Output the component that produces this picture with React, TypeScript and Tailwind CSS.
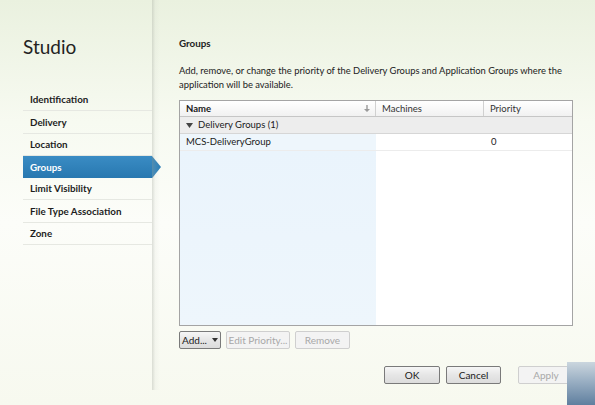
import React from "react";

const navItems = [
  "Identification",
  "Delivery",
  "Location",
  "Groups",
  "Limit Visibility",
  "File Type Association",
  "Zone",
];

function Btn({ children, disabled, w }: { children: React.ReactNode; disabled?: boolean; w: string }) {
  return (
    <div
      className={
        "h-[18px] flex items-center justify-center whitespace-nowrap rounded-[2px] border text-[10px] leading-none " +
        w +
        " " +
        (disabled
          ? "border-[#cfcfcf] bg-[#f3f3f3] text-[#a8a8a8]"
          : "border-[#7a7a7a] bg-[linear-gradient(180deg,#f6f6f6_0%,#e6e6e6_50%,#dcdcdc_100%)] text-[#1a1a1a]")
      }
    >
      {children}
    </div>
  );
}

export default function App() {
  return (
    <div
      className="relative w-[595px] h-[405px] overflow-hidden flex bg-[linear-gradient(180deg,#eaf1df_0%,#f7faf1_30%,#fcfdf9_55%,#f7f9ef_100%)] text-[#1a1a1a]"
      style={{ fontFamily: 'Lato, "Open Sans", sans-serif' }}
    >
      {/* left panel */}
      <div className="relative w-[152px] shrink-0 pt-[33px]">
        <div className="pl-[23px] text-[19px] leading-[28px] text-[#222]">Studio</div>
        <div className="mt-[28px] ml-[23px]">
          {navItems.map((n) => {
            const active = n === "Groups";
            return (
              <div
                key={n}
                className={
                  "relative h-[22.3px] flex items-center pl-[7px] text-[9.8px] font-bold " +
                  (active
                    ? "bg-[linear-gradient(180deg,#3a8cc4_0%,#2878b0_100%)] text-white"
                    : "border-b border-[#e6e8e2] text-[#1e1e1e]")
                }
              >
                {n}
                {active && (
                  <div className="absolute right-[-9px] top-0 h-full w-[9px] bg-[#2d7fb6] [clip-path:polygon(0_0,100%_50%,0_100%)]" />
                )}
              </div>
            );
          })}
        </div>
      </div>
      {/* shadow */}
      <div className="absolute left-[152px] top-[0px] h-[390px] w-[8px] bg-[linear-gradient(90deg,rgba(160,165,155,0.35)_0%,rgba(200,205,195,0.12)_40%,rgba(255,255,255,0)_100%)]" />

      {/* content */}
      <div className="relative flex-1 pl-[27px] pt-[35px] pr-[22px]">
        <div className="text-[9.8px] font-bold leading-[16px] text-[#222]">Groups</div>
        <div className="mt-[13px] text-[9.4px] leading-[13.5px] text-[#222]">
          Add, remove, or change the priority of the Delivery Groups and Application Groups where the application will be available.
        </div>
        {/* table */}
        <div className="mt-[9px] w-[394px] h-[226px] border border-[#a4a4a4] bg-white flex flex-col text-[9.5px]">
          <div className="flex h-[16px] border-b border-[#c6c6c6] bg-[linear-gradient(180deg,#ffffff_0%,#f1f1f1_100%)] leading-none">
            <div className="w-[196px] flex items-center justify-between pl-[6px] pr-[5px] border-r border-[#d0d0d0] font-bold">
              <span>Name</span>
              <svg width="6" height="7" viewBox="0 0 6 7">
                <path d="M2.3 0h1.4v4H6L3 7 0 4h2.3z" fill="#9a9a9a" />
              </svg>
            </div>
            <div className="w-[108px] flex items-center pl-[6px] border-r border-[#d0d0d0] text-[#333]">Machines</div>
            <div className="flex-1 flex items-center pl-[6px] text-[#333]">Priority</div>
          </div>
          <div className="h-[17px] flex items-center pl-[6px] border-b border-[#d6d6d6] bg-[#ededed] leading-none">
            <svg width="7" height="5" viewBox="0 0 7 5" className="mr-[5px]">
              <path d="M0 0h7L3.5 5z" fill="#444" />
            </svg>
            <span>Delivery Groups (1)</span>
          </div>
          <div className="flex h-[17px] border-b border-[#ececec] leading-none">
            <div className="w-[196px] bg-[#eef6fc] flex items-center pl-[6px]">MCS-DeliveryGroup</div>
            <div className="w-[108px]" />
            <div className="flex-1 flex items-center pl-[7px]">0</div>
          </div>
          <div className="flex flex-1">
            <div className="w-[196px] bg-[linear-gradient(180deg,#eaf4fc_0%,#eef6fc_100%)]" />
            <div className="flex-1" />
          </div>
        </div>
        <div className="mt-[5px] flex gap-[5px]">
          <Btn w="w-[42px]">
            <span>Add...</span>
            <svg width="6" height="4" viewBox="0 0 6 4" className="ml-[5px]">
              <path d="M0 0h6L3 4z" fill="#333" />
            </svg>
          </Btn>
          <Btn w="w-[64px]" disabled>Edit Priority...</Btn>
          <Btn w="w-[55px]" disabled>Remove</Btn>
        </div>
        <div className="mt-[17px] flex gap-[6px] pl-[205px]">
          <Btn w="w-[56px]">OK</Btn>
          <Btn w="w-[55px]">Cancel</Btn>
          <div className="w-[5px]" />
          <Btn w="w-[56px]" disabled>Apply</Btn>
        </div>
      </div>
      {/* bottom-right corner */}
      <div className="absolute right-0 bottom-0 w-[28px] h-[43px] bg-[linear-gradient(180deg,#cbd6de_0%,#9fb3c6_40%,#5f7f9f_100%)]" />
    </div>
  );
}
